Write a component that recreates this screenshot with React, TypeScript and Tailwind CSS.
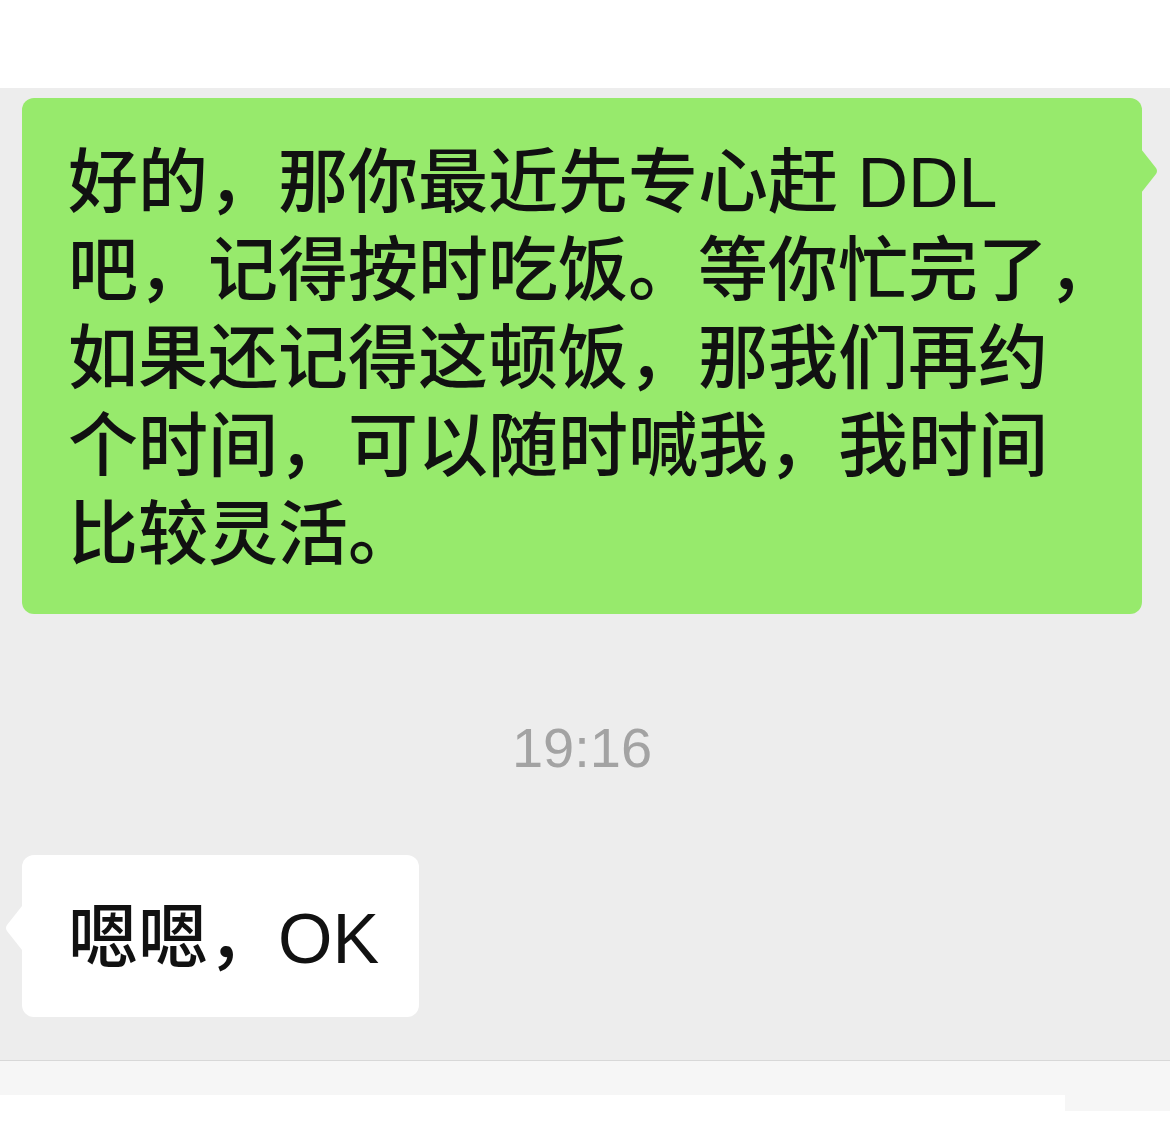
import React from "react";

const font = { fontFamily: '"Liberation Sans", "Noto Sans CJK SC", sans-serif' };

export default function App() {
  const lines = [
    "好的，那你最近先专心赶 DDL",
    "吧，记得按时吃饭。等你忙完了，",
    "如果还记得这顿饭，那我们再约",
    "个时间，可以随时喊我，我时间",
    "比较灵活。",
  ];
  return (
    <div className="w-[1170px] h-[1130px] bg-white flex flex-col overflow-hidden" style={font}>
      <div className="h-[88px] bg-white shrink-0" />
      <div className="h-[972px] bg-[#ededed] shrink-0 flex flex-col pt-[10px]">
        <div className="relative ml-[22px] w-[1120px] bg-[#97ea6c] rounded-[12px] pl-[46px] pt-[41px] pb-[35px] text-[70px] leading-[88px] font-medium text-[#111111]">
          {lines.map((l, i) => (
            <div key={i} className="whitespace-nowrap">{l}</div>
          ))}
          <svg className="absolute right-[-17px] top-[51px]" width="18" height="44" viewBox="0 0 18 44">
            <path d="M0 0 L15 19 Q17 22 15 25 L0 44 Z" fill="#97ea6c" />
          </svg>
        </div>
        <div className="mt-[104px] h-[60px] flex items-center justify-center text-[56px] text-[#a3a3a3] pr-[6px]">
          19:16
        </div>
        <div className="mt-[77px] relative ml-[22px] w-[397px] bg-white rounded-[12px] pl-[46px] pt-[40px] pb-[34px] text-[70px] leading-[88px] font-medium text-[#111111]">
          <div className="whitespace-nowrap">嗯嗯，OK</div>
          <svg className="absolute left-[-18px] top-[51px]" width="18" height="44" viewBox="0 0 18 44">
            <path d="M18 0 L3 19 Q1 22 3 25 L18 44 Z" fill="#ffffff" />
          </svg>
        </div>
      </div>
      <div className="h-px bg-[#d8d8d8] shrink-0" />
      <div className="h-[34px] bg-[#f6f6f6] shrink-0" />
      <div className="flex-1 bg-white flex">
        <div className="flex-1" />
        <div className="w-[105px] h-[16px] bg-[#f6f6f6]" />
      </div>
    </div>
  );
}
